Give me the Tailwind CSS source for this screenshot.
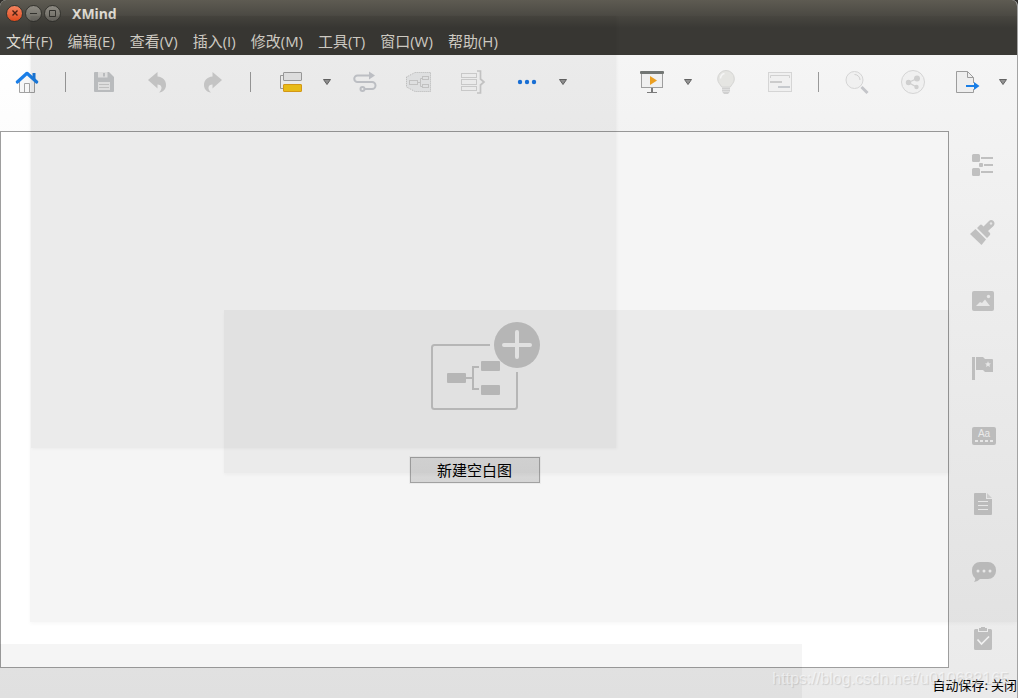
<!DOCTYPE html>
<html lang="zh-CN">
<head>
<meta charset="utf-8">
<meta name="viewport" content="width=device-width, initial-scale=1">
<title>XMind</title>
<script src="https://cdn.jsdelivr.net/npm/@tailwindcss/browser@4"></script>
</head>
<body class="bg-[#2f2e2b] font-['Noto_Sans_CJK_SC',sans-serif]">
<div class="relative flex h-screen flex-col overflow-hidden rounded-t-md border-r border-[#a3a3a3] bg-[#ebebeb]">

  <!-- Title bar and menu -->
  <header class="bg-linear-to-b from-[#5e5b52] to-[#3d3c38] to-[28px]">
    <div class="flex h-[26px] items-center gap-[2px] pl-[6px]">
      <button aria-label="关闭" class="flex size-[17px] items-center justify-center rounded-full border border-[#35342f] bg-linear-to-b from-[#f4845f] to-[#df4a1a]">
        <svg class="size-4 shrink-0" viewBox="0 0 16 16" stroke="#4a2213" stroke-width="1.4"><path d="M5.500 5.500l5 5M10.500 5.500l-5 5"/></svg>
      </button>
      <button aria-label="最小化" class="flex size-[17px] items-center justify-center rounded-full border border-[#35342f] bg-linear-to-b from-[#8e8b83] to-[#6b6962]">
        <svg class="size-[15px] shrink-0" viewBox="0 0 15 15" stroke="#33322e"><path d="M4 7.500h7"/></svg>
      </button>
      <button aria-label="最大化" class="flex size-[17px] items-center justify-center rounded-full border border-[#35342f] bg-linear-to-b from-[#8e8b83] to-[#6b6962]">
        <svg class="size-[15px] shrink-0" viewBox="0 0 15 15" fill="none" stroke="#33322e"><path d="M4.500 4.500h6v6h-6z"/></svg>
      </button>
      <h1 class="pl-[9px] font-['Noto_Sans',sans-serif] text-[14px] font-bold text-[#dfdbd2]">XMind</h1>
    </div>
    <nav class="flex h-[29px] items-center gap-[15px] pt-px pl-[6px] text-[15px] whitespace-nowrap text-[#dfdbd2]">
      <button>文件<span class="font-['Open_Sans',sans-serif]">(F)</span></button>
      <button>编辑<span class="font-['Open_Sans',sans-serif]">(E)</span></button>
      <button>查看<span class="font-['Open_Sans',sans-serif]">(V)</span></button>
      <button>插入<span class="font-['Open_Sans',sans-serif]">(I)</span></button>
      <button>修改<span class="font-['Open_Sans',sans-serif]">(M)</span></button>
      <button>工具<span class="font-['Open_Sans',sans-serif]">(T)</span></button>
      <button>窗口<span class="font-['Open_Sans',sans-serif]">(W)</span></button>
      <button>帮助<span class="font-['Open_Sans',sans-serif]">(H)</span></button>
    </nav>
  </header>

  <div class="flex min-h-0 flex-1 flex-col bg-linear-to-b from-[#ffffff] to-[#eaeaea]">
    <!-- Toolbar -->
    <div role="toolbar" class="flex h-[76px] shrink-0 justify-between pr-[5px]">
      <div class="flex h-[54px] items-center">
        <button aria-label="首页" class="flex h-full w-[54px] items-center justify-center">
          <svg class="size-7" viewBox="0 0 28 28" fill="none"><path d="M6.500 14V24.500H21.500V14L14 7.500Z" fill="#f7f7f7"/><path d="M6.500 14V24.500H21.500V14M11.500 24.500V15.500H16.500V24.500" stroke="#a3a3a3"/><path d="M19.500 5h3v7h-3z" fill="#1b7be0"/><path d="M4.300 14L14 5.300L23.700 14" stroke="#1b7fe8" stroke-width="3.200" stroke-linecap="round" stroke-linejoin="round"/></svg>
        </button>
        <div class="flex w-[23px] justify-center"><span class="h-5 w-px bg-[#a0a0a0]"></span></div>
        <button aria-label="保存" class="flex h-full w-[54px] items-center justify-center">
          <svg class="size-7" viewBox="0 0 28 28"><path d="M5 4H19L24 9V23a1 1 0 0 1-1 1H5a1 1 0 0 1-1-1V5a1 1 0 0 1 1-1Z" fill="#c9cbce"/><path d="M8 4h9.500v5.500H8zM8 14h12v8H8z" fill="#f2f2f2"/><path d="M13 5h2v3.500h-2z" fill="#c9cbce"/><path d="M9 16.500h10M9 19.500h10" stroke="#d0d0d0"/></svg>
        </button>
        <button aria-label="撤销" class="flex h-full w-[54px] items-center justify-center">
          <svg class="size-7" viewBox="0 0 28 28"><path d="M4 12L13.500 4V8.500C19 9 22 12.500 22 17C22 21 19.500 24 15 24.500C19 21 18 16.500 13.500 16.500V20.500Z" fill="#d3d3d3"/></svg>
        </button>
        <button aria-label="重做" class="flex h-full w-[54px] items-center justify-center">
          <svg class="size-7" viewBox="0 0 28 28"><path d="M24 12L14.500 4V8.500C9 9 6 12.500 6 17C6 21 8.500 24 13 24.500C9 21 10 16.500 14.500 16.500V20.500Z" fill="#d6d6d6"/></svg>
        </button>
        <div class="flex w-[23px] justify-center"><span class="h-5 w-px bg-[#a0a0a0]"></span></div>
        <div class="flex h-full items-center px-[2px]">
          <button aria-label="主题" class="flex h-full w-[54px] items-center justify-center">
            <svg class="size-7" viewBox="0 0 28 28"><path d="M6 7.500H3.500V20.500H6" fill="none" stroke="#a5a5a5"/><rect x="6.500" y="4.500" width="18" height="8" rx=".5" fill="#f0f0f0" stroke="#a5a5a5"/><rect x="6.500" y="16.500" width="18" height="7" rx=".5" fill="#fccb1c" stroke="#e5a51a"/></svg>
          </button>
          <button aria-label="主题选项" class="flex h-full w-[18px] items-center justify-center">
            <svg class="h-[6px] w-2" viewBox="0 0 8 6"><path d="M.5 .5h7L4 5.500z" fill="#999" stroke="#686868"/></svg>
          </button>
        </div>
        <button aria-label="联系" class="flex h-full w-[54px] items-center justify-center">
          <svg class="size-7" viewBox="0 0 28 28" fill="none" stroke="#cccfd4" stroke-width="2"><path d="M18 7.500H6.500a3.250 3.250 0 0 0 0 6.500H21a3.500 3.500 0 0 1 0 7H14"/><circle cx="11.500" cy="21" r="2"/><path d="M18 3.500L24 7.500L18 11.500Z" fill="#cccfd4" stroke="none"/></svg>
        </button>
        <button aria-label="外框" class="flex h-full w-[54px] items-center justify-center">
          <svg class="size-7" viewBox="0 0 28 28" fill="none" stroke="#d2d2d2"><path d="M1.500 9L10 4.500H25.500V23.500H10L1.500 19Z" fill="#f2f3f4" stroke-dasharray="1 1" stroke="#c4c4c4"/><rect x="4.500" y="12.500" width="8" height="4"/><rect x="17.500" y="8.500" width="6" height="3"/><rect x="17.500" y="16.500" width="6" height="3"/><path d="M12.500 14.500H15.500M17.500 10.500H15.500V18.500H17.500"/></svg>
        </button>
        <button aria-label="概要" class="flex h-full w-[54px] items-center justify-center">
          <svg class="size-7" viewBox="0 0 28 28" fill="none" stroke="#dadada"><rect x="2.500" y="5.500" width="15" height="4"/><rect x="2.500" y="11.500" width="15" height="5"/><rect x="2.500" y="18.500" width="15" height="4"/><path d="M18 3H21.500V11L25 14L21.500 17V25H18" stroke="#d3d3d3" stroke-width="1.700"/></svg>
        </button>
        <button aria-label="更多" class="flex h-full w-[54px] items-center justify-center">
          <svg class="size-7" viewBox="0 0 28 28" fill="#1c78e6"><circle cx="7" cy="14" r="2.200"/><circle cx="14" cy="14" r="2.200"/><circle cx="21" cy="14" r="2.200"/></svg>
        </button>
        <button aria-label="更多选项" class="flex h-full w-[18px] items-center justify-center">
          <svg class="h-[6px] w-2" viewBox="0 0 8 6"><path d="M.5 .5h7L4 5.500z" fill="#999" stroke="#686868"/></svg>
        </button>
      </div>

      <div class="flex h-[54px] items-center">
        <button aria-label="演示" class="flex h-full w-[54px] items-center justify-center">
          <svg class="size-7" viewBox="0 0 28 28"><rect x="3.500" y="5.500" width="21" height="14" fill="#fafafa" stroke="#a5a5a5"/><rect x="2" y="3" width="24" height="3" rx="1" fill="#777b79"/><path d="M12 8L19 12.500L12 17Z" fill="#f5a623"/><path d="M13 20h2v4h-2zM9 24h10v1H9z" fill="#808080"/></svg>
        </button>
        <button aria-label="演示选项" class="mr-[2px] flex h-full w-[18px] items-center justify-center">
          <svg class="h-[6px] w-2" viewBox="0 0 8 6"><path d="M.5 .5h7L4 5.500z" fill="#999" stroke="#686868"/></svg>
        </button>
        <button aria-label="头脑风暴" class="flex h-full w-[54px] items-center justify-center">
          <svg class="size-7" viewBox="0 0 28 28"><path d="M14 2.500a8.300 8.300 0 0 0-8.300 8.300c0 3.700 2.300 5.200 4 8.200h8.600c1.700-3 4-4.500 4-8.200A8.300 8.300 0 0 0 14 2.500Z" fill="#efefec" stroke="#dededc"/><path d="M8.500 10.500a5.500 5.500 0 0 1 4-5" fill="none" stroke="#fff" stroke-width="1.500"/><path d="M10 19.500h8v4l-2 2.500h-4l-2-2.500z" fill="#d9d9d9"/><path d="M10 21.500h8M10 23.500h8" stroke="#e9e9e9"/></svg>
        </button>
        <button aria-label="甘特图" class="flex h-full w-[54px] items-center justify-center">
          <svg class="size-7" viewBox="0 0 28 28" fill="none"><rect x="2.500" y="4.500" width="23" height="19" fill="#fafafa" stroke="#dedede"/><path d="M4.500 10V7.500H23.500V10" stroke="#dadada"/><path d="M4 14H16" stroke="#d4d4d4" stroke-width="2"/><path d="M12 19H24" stroke="#d0d3d7" stroke-width="2"/></svg>
        </button>
        <div class="flex w-[23px] justify-center"><span class="h-5 w-px bg-[#a0a0a0]"></span></div>
        <button aria-label="搜索" class="mr-[2px] flex h-full w-[54px] items-center justify-center">
          <svg class="size-7" viewBox="0 0 28 28" fill="none"><circle cx="11.500" cy="12" r="8.500" fill="#fafafa" stroke="#dedede"/><path d="M11.500 6.500a5.500 5.500 0 0 1 5.500 5.500" stroke="#d8d8d8"/><path d="M18.500 19L24.500 25" stroke="#cdced2" stroke-width="3"/></svg>
        </button>
        <button aria-label="分享" class="flex h-full w-[54px] items-center justify-center">
          <svg class="size-7" viewBox="0 0 28 28" fill="#d8d8d8"><circle cx="14" cy="14" r="11.500" fill="#fafafa" stroke="#dedede"/><circle cx="9.500" cy="14.500" r="2.700"/><circle cx="18" cy="10.500" r="3"/><circle cx="17.500" cy="19" r="2.200"/><path d="M18 10.500L9.500 14.500L17.500 19" fill="none" stroke="#d8d8d8" stroke-width="1.300"/></svg>
        </button>
        <button aria-label="导出" class="flex h-full w-[54px] items-center justify-center">
          <svg class="size-7" viewBox="0 0 28 28" fill="none"><path d="M20.500 15V9.500L14.500 3.500H3.500V24.500H20.500V21" fill="#f8f8f8" stroke="#a3a3a3"/><path d="M14.500 3.500V9.500H20.500" stroke="#a3a3a3"/><path d="M13 18h8.500" stroke="#1b84f0" stroke-width="2"/><path d="M21 14L26.500 18L21 22Z" fill="#1b84f0"/></svg>
        </button>
        <button aria-label="导出选项" class="flex h-full w-[18px] items-center justify-center">
          <svg class="h-[6px] w-2" viewBox="0 0 8 6"><path d="M.5 .5h7L4 5.500z" fill="#999" stroke="#686868"/></svg>
        </button>
      </div>
    </div>

    <!-- Workspace and side bar -->
    <div class="flex min-h-0 flex-1">
      <main class="mb-1 flex flex-1 flex-col items-center justify-center gap-[46px] border border-[#9e9e9e] bg-white pt-[6px]">
        <svg class="h-[89px] w-[130px]" viewBox="410 322 130 89" fill="none" stroke="#cfcfcf"><path d="M490 345H434.500a2.500 2.500 0 0 0-2.500 2.500V406.500a2.500 2.500 0 0 0 2.500 2.500H514.500a2.500 2.500 0 0 0 2.500-2.500V372" stroke-width="2"/><path d="M466 378h7M479 367h-6v22h6" stroke-width="2"/><g fill="#cfcfcf" stroke="none"><rect x="447" y="373" width="19" height="10" rx="1"/><rect x="481" y="361" width="19" height="10" rx="1"/><rect x="481" y="385" width="19" height="10" rx="1"/><circle cx="517" cy="345" r="23"/></g><path d="M504 345H530M517 332V357" stroke="#fff" stroke-width="4" stroke-linecap="round"/></svg>
        <button class="flex h-[26px] w-[130px] items-center justify-center border border-[#a8a8a8] bg-linear-to-b from-[#e2e2e2] to-[#dedede] text-[15px] text-black shadow-[0_0_0_1px_rgb(0_0_0/0.04)]">新建空白图</button>
      </main>
      <aside class="flex w-[68px] flex-col">
        <button aria-label="大纲" class="flex flex-1 items-center justify-center">
          <svg class="size-7" viewBox="0 0 28 28" fill="#c8c8c8"><rect x="3" y="3" width="8" height="8" rx="1.500"/><rect x="3" y="17" width="8" height="8" rx="1.500"/><rect x="10" y="12" width="4" height="4" rx="1"/><path d="M12 6h12v2H12zM15 13h9v2h-9zM12 20h12v2H12z"/></svg>
        </button>
        <button aria-label="格式" class="flex flex-1 items-center justify-center">
          <svg class="size-7" viewBox="0 0 28 28" fill="#c8c8c8"><path d="M1 16L6.500 11L17 21.500L12.500 27Z"/><path d="M8 10L11 7Q12 6 13 7L14.500 8.500L19.500 3.500Q22 1 24.500 3Q26.500 5.500 24.500 8L19 13L21 15Q21.500 16 21 17L18 20Z"/><circle cx="22" cy="5.500" r="1.200" fill="#efefef"/></svg>
        </button>
        <button aria-label="图片" class="flex flex-1 items-center justify-center">
          <svg class="size-7" viewBox="0 0 28 28" fill="#c8c8c8"><rect x="3" y="5" width="22" height="20" rx="2"/><path d="M7 20L11 16L13 17L16 13.500L21 20Z" fill="#f1f1f1"/><circle cx="19.500" cy="10.500" r="1.700" fill="#f1f1f1"/></svg>
        </button>
        <button aria-label="图标" class="flex flex-1 items-center justify-center">
          <svg class="size-7" viewBox="0 0 28 28" fill="#c6c6c6"><path d="M3 3h3v23H3zM7 3h7l2 2h7a1 1 0 0 1 1 1v12h-8l-2-2H7z"/><path d="M19 7.300l.9 1.900 2.100.2-1.600 1.400.5 2.100-1.900-1.100-1.900 1.100.5-2.100L16 9.400l2.100-.2z" fill="#f1f1f1"/></svg>
        </button>
        <button aria-label="标签" class="flex flex-1 items-center justify-center">
          <svg class="size-7" viewBox="0 0 28 28" fill="#c4c4c4"><rect x="3" y="6" width="24" height="18" rx="2"/><text x="15" y="16" text-anchor="middle" fill="#f4f4f4" class="font-['Liberation_Sans',sans-serif] text-[10px]">Aa</text><path d="M6 19h3v2H6zM11 19h3v2h-3zM16 19h3v2h-3zM21 19h3v2h-3z" fill="#f1f1f1"/></svg>
        </button>
        <button aria-label="备注" class="flex flex-1 items-center justify-center">
          <svg class="size-7" viewBox="0 0 28 28" fill="#c3c3c3"><path d="M6 4H17V10H23V25a1 1 0 0 1-1 1H6a1 1 0 0 1-1-1V5a1 1 0 0 1 1-1Z"/><path d="M18 4L23 9H18Z" fill="#d5d5d5"/><path d="M9 12.500h10M9 16.500h10M9 20.500h10" stroke="#f1f1f1"/></svg>
        </button>
        <button aria-label="批注" class="flex flex-1 items-center justify-center">
          <svg class="size-7" viewBox="0 0 28 28" fill="#c1c1c1"><path d="M11 5H19a8 8 0 0 1 8 8v1a8 8 0 0 1-8 8H11Q9 24.500 5 25Q7 23 6 21Q3 18.500 3 14V13a8 8 0 0 1 8-8Z"/><g fill="#f1f1f1"><circle cx="9" cy="14" r="1.500"/><circle cx="15" cy="14" r="1.500"/><circle cx="21" cy="14" r="1.500"/></g></svg>
        </button>
        <button aria-label="任务" class="flex flex-1 items-center justify-center">
          <svg class="size-7" viewBox="0 0 28 28" fill="#bebebe"><path d="M6.500 5H9V8H19V5H21.500A1.500 1.500 0 0 1 23 6.500V24.500A1.500 1.500 0 0 1 21.500 26H6.500A1.500 1.500 0 0 1 5 24.500V6.500A1.500 1.500 0 0 1 6.500 5Z"/><path d="M10 4h2V3h4v1h2v3h-8z"/><path d="M8.500 15.500L12.500 20L20 12.500" fill="none" stroke="#f1f1f1" stroke-width="1.700"/></svg>
        </button>
      </aside>
    </div>

    <!-- Status bar -->
    <footer class="flex h-[26px] shrink-0 items-center justify-end text-[13px] whitespace-nowrap text-black">自动保存: 关闭</footer>
  </div>

  <!-- Translucent ghost panels floating over the window -->
  <div class="pointer-events-none absolute top-4 right-0 bottom-[76px] left-[30px] bg-black/4 shadow-[0_2px_4px_rgb(0_0_0/0.03)]"></div>
  <div class="pointer-events-none absolute top-4 left-[31px] h-[432px] w-[585px] bg-black/4 shadow-[1px_1px_3px_rgb(0_0_0/0.04)]"></div>
  <div class="pointer-events-none absolute top-[310px] right-[68px] left-[224px] h-[163px] bg-black/4 shadow-[0_2px_3px_rgb(0_0_0/0.03)]"></div>
  <div class="pointer-events-none absolute top-[644px] bottom-0 left-0 w-[802px] bg-black/4"></div>
  <p class="pointer-events-none absolute right-[8px] bottom-[7px] font-['Liberation_Sans',sans-serif] text-[16px] text-white/50 [text-shadow:1px_1px_1px_rgb(0_0_0/0.12)]">https://blog.csdn.net/u010682165</p>
</div>
</body>
</html>
